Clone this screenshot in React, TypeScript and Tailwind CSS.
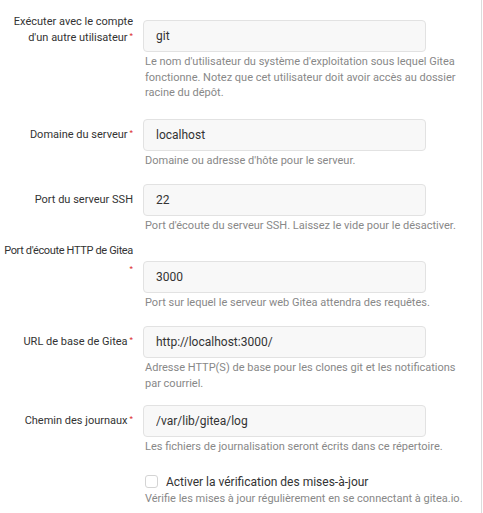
import type { ReactNode } from "react";

const labelClass = "w-[133px] shrink-0 text-right text-[11px] leading-[16px] text-[#333]";
const inputClass =
  "block h-[32px] w-[283px] rounded-[4px] border border-[#e2e2e2] bg-[#f8f8f8] px-[12px] text-[12px] text-[#333] outline-none";
const helpClass = "mt-[2px] pl-[2px] text-[11px] leading-[15.5px] text-[#888]";

function Required() {
  return <span className="relative -top-[3px] ml-[2px] text-[8px] text-[#db2828]">*</span>;
}

function Field({
  label,
  value,
  help,
  rowClass,
  labelOffset,
  inputOffset,
}: {
  label: ReactNode;
  value: string;
  help: ReactNode;
  rowClass: string;
  labelOffset: string;
  inputOffset: string;
}) {
  return (
    <div className={`flex items-start ${rowClass}`}>
      <div className={`${labelClass} ${labelOffset}`}>{label}</div>
      <div className={`ml-[10px] flex-1 pr-[8px] ${inputOffset}`}>
        <input className={inputClass} defaultValue={value} readOnly />
        <p className={helpClass}>{help}</p>
      </div>
    </div>
  );
}

export default function App() {
  return (
    <div className="min-h-[513px] w-[483px] bg-white" style={{ fontFamily: "Roboto, sans-serif" }}>
      <div className="min-h-[513px] w-[482px] border-r border-[#dcdcdc] pt-[14px]">
        <Field
          rowClass=""
          labelOffset=""
          inputOffset="mt-[6px]"
          label={
            <>
              Exécuter avec le compte
              <br />
              d'un autre utilisateur
              <Required />
            </>
          }
          value="git"
          help="Le nom d'utilisateur du système d'exploitation sous lequel Gitea fonctionne. Notez que cet utilisateur doit avoir accès au dossier racine du dépôt."
        />
        <Field
          rowClass="mt-[18px]"
          labelOffset="mt-[8px]"
          inputOffset=""
          label={
            <>
              Domaine du serveur
              <Required />
            </>
          }
          value="localhost"
          help="Domaine ou adresse d'hôte pour le serveur."
        />
        <Field
          rowClass="mt-[16px]"
          labelOffset="mt-[8px]"
          inputOffset=""
          label="Port du serveur SSH"
          value="22"
          help="Port d'écoute du serveur SSH. Laissez le vide pour le désactiver."
        />
        <Field
          rowClass="mt-[9px]"
          labelOffset=""
          inputOffset="mt-[18px]"
          label={
            <>
              <div className="whitespace-nowrap tracking-[-0.35px]">Port d'écoute HTTP de Gitea</div>
              <div className="mt-[4px] leading-[16px]">
                <Required />
              </div>
            </>
          }
          value="3000"
          help="Port sur lequel le serveur web Gitea attendra des requêtes."
        />
        <Field
          rowClass="mt-[16px]"
          labelOffset="mt-[8px]"
          inputOffset=""
          label={
            <>
              URL de base de Gitea
              <Required />
            </>
          }
          value="http://localhost:3000/"
          help="Adresse HTTP(S) de base pour les clones git et les notifications par courriel."
        />
        <Field
          rowClass="mt-[14px]"
          labelOffset="mt-[8px]"
          inputOffset=""
          label={
            <>
              Chemin des journaux
              <Required />
            </>
          }
          value="/var/lib/gitea/log"
          help="Les fichiers de journalisation seront écrits dans ce répertoire."
        />
        <div className="ml-[145px] mt-[19px]">
          <label className="flex items-center gap-[8px] text-[12px] leading-[16px] text-[#333]">
            <span className="block h-[13px] w-[13px] rounded-[3px] border border-[#d4d4d4] bg-white" />
            Activer la vérification des mises-à-jour
          </label>
          <p className="mt-[1px] text-[11px] leading-[15.5px] text-[#888]">
            Vérifie les mises à jour régulièrement en se connectant à gitea.io.
          </p>
        </div>
      </div>
    </div>
  );
}
